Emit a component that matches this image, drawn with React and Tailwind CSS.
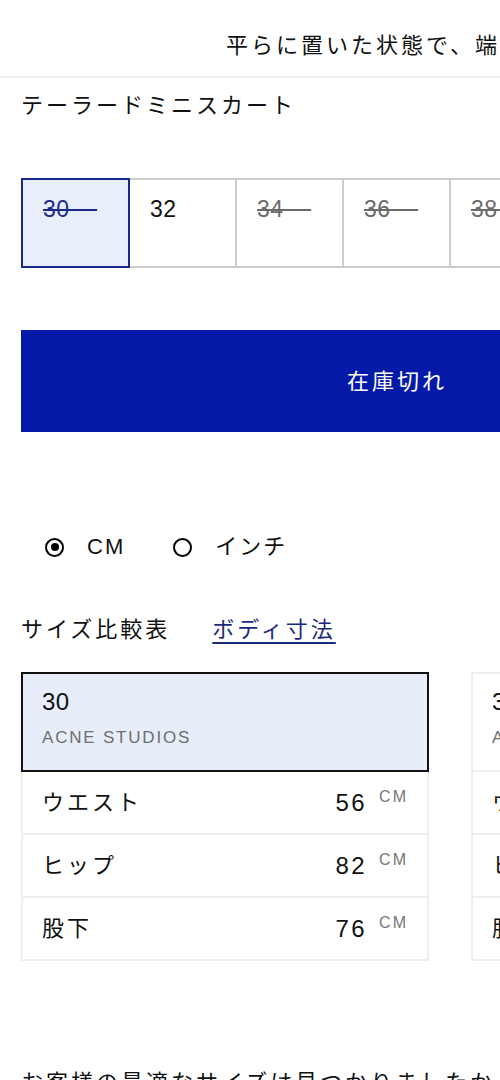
import React, { useState } from "react";

const font = { fontFamily: '"Liberation Sans", "Noto Sans CJK JP", sans-serif' };

const sizes = [
  { label: "30", available: false },
  { label: "32", available: true },
  { label: "34", available: false },
  { label: "36", available: false },
  { label: "38", available: false },
];

const cards = [
  { size: "30", rows: [["ウエスト", "56"], ["ヒップ", "82"], ["股下", "76"]] },
  { size: "32", rows: [["ウエスト", "60"], ["ヒップ", "86"], ["股下", "76"]] },
];

const Radio = ({ checked, label }) => (
  <div className="flex items-center gap-[23px]">
    <div className="w-[19px] h-[19px] rounded-full border-2 border-black flex items-center justify-center">
      {checked && <div className="w-[8px] h-[8px] rounded-full bg-black"></div>}
    </div>
    <span className="text-[22px] leading-[24px] tracking-[2px] text-[#111]">{label}</span>
  </div>
);

const SizeCard = ({ card, selected }) => (
  <div className="w-[408px] shrink-0">
    <div
      className={`h-[100px] px-[19px] pt-[13px] ${
        selected ? "bg-[#e7eefa] border-2 border-[#111]" : "bg-white border-2 border-[#eeeeee]"
      }`}
    >
      <div className="text-[24px] leading-[30px] tracking-[0.5px] text-[#111]">{card.size}</div>
      <div className="mt-[10px] text-[17px] leading-[22px] tracking-[1.8px] text-[#6e6e6e]">ACNE STUDIOS</div>
    </div>
    {card.rows.map(([name, val]) => (
      <div
        key={name}
        className="h-[63px] flex items-center justify-between pl-[19px] pr-[19px] border-2 border-t-0 border-[#eeeeee]"
      >
        <span className="text-[22px] tracking-[3px] text-[#111]">{name}</span>
        <span className="flex items-start gap-[12px]">
          <span className="text-[24px] leading-[30px] tracking-[2.5px] text-[#111]">{val}</span>
          <span className="text-[16px] leading-[18px] tracking-[2px] text-[#777]">CM</span>
        </span>
      </div>
    ))}
  </div>
);

export default function App() {
  const [unit, setUnit] = useState("cm");

  return (
    <div className="w-[500px] h-[1080px] overflow-hidden bg-white text-[#111]" style={font}>
      {/* header line */}
      <div className="h-[78px] border-b-2 border-[#efefef] flex items-center pl-[226px] pt-[14px] whitespace-nowrap">
        <span className="text-[22px] tracking-[3px]">平らに置いた状態で、端から端まで測定しています</span>
      </div>

      <div className="pl-[21px]">
        <div className="pt-[14px] text-[22px] leading-[28px] tracking-[3px] whitespace-nowrap">テーラードミニスカート</div>

        {/* size selector */}
        <div className="mt-[58px] flex whitespace-nowrap">
          {sizes.map((s, i) => {
            const selected = i === 0;
            return (
              <div
                key={s.label}
                className={`shrink-0 h-[90px] px-[20px] pt-[15px] ${
                  selected
                    ? "w-[109px] bg-[#e8eefa] border-2 border-[#1a2a8c]"
                    : "w-[107px] bg-white border-2 border-l-0 border-[#cccccc]"
                }`}
              >
                <span
                  className={`text-[23px] leading-[28px] tracking-[0.5px] ${
                    s.available ? "text-[#111]" : "line-through"
                  } ${selected ? "text-[#1a2a8c]" : s.available ? "" : "text-[#6b6b6b]"}`}
                >
                  {s.available ? s.label : s.label + "\u00a0\u00a0\u00a0\u00a0"}
                </span>
              </div>
            );
          })}
        </div>

        {/* add to cart */}
        <button className="mt-[62px] w-[752px] h-[102px] bg-[#0519a8] text-white text-[22px] tracking-[3px] flex items-center justify-center">
          在庫切れ
        </button>

        {/* units */}
        <div className="mt-[103px] pl-[24px] flex items-center gap-[48px]">
          <button onClick={() => setUnit("cm")}>
            <Radio checked={unit === "cm"} label="CM" />
          </button>
          <button onClick={() => setUnit("in")}>
            <Radio checked={unit === "in"} label="インチ" />
          </button>
        </div>

        {/* tabs */}
        <div className="mt-[57px] flex items-center gap-[42px] text-[22px] leading-[28px] tracking-[3px]">
          <span>サイズ比較表</span>
          <span className="text-[#1b2a7a] underline underline-offset-[5px] decoration-[2px]">ボディ寸法</span>
        </div>

        {/* size cards */}
        <div className="mt-[28px] flex gap-[42px]">
          {cards.map((c, i) => (
            <SizeCard key={c.size} card={c} selected={i === 0} />
          ))}
        </div>

        <div className="mt-[108px] text-[22px] leading-[28px] tracking-[3px] whitespace-nowrap">
          お客様の最適なサイズは見つかりましたか？
        </div>
      </div>
    </div>
  );
}
